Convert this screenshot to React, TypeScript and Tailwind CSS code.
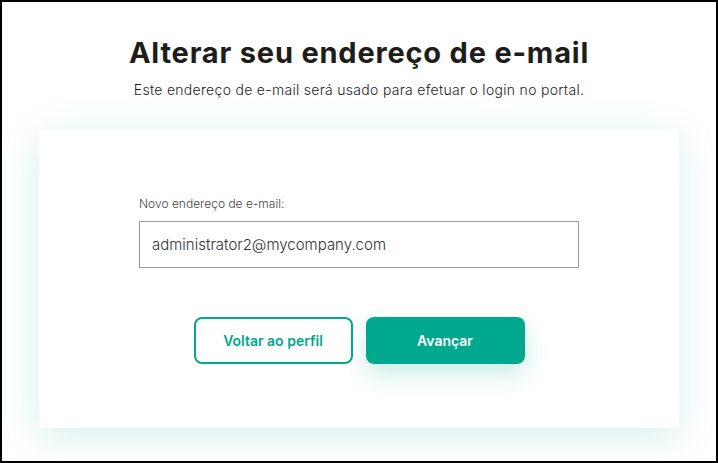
export default function App() {
  return (
    <div className="box-border flex h-[463px] w-[718px] flex-col items-center border-2 border-black bg-white font-['Inter',sans-serif]">
      <h1 className="mt-[33px] text-[29px] font-bold leading-[36px] tracking-[0.8px] text-[#1d1d1b]">
        Alterar seu endereço de e-mail
      </h1>
      <p className="mt-[9px] text-[14px] font-light leading-[20px] tracking-[0.3px] text-[#1d1d1b]">
        Este endereço de e-mail será usado para efetuar o login no portal.
      </p>

      <div className="mt-[30px] flex h-[298px] w-[640px] flex-col items-center bg-white shadow-[0_8px_36px_rgba(0,168,142,0.17)]">
        <div className="mt-[65px] w-[440px]">
          <label
            htmlFor="email"
            className="block text-[12px] font-light leading-[18px] text-[#444]"
          >
            Novo endereço de e-mail:
          </label>
          <input
            id="email"
            readOnly
            value="administrator2@mycompany.com"
            className="mt-[8px] box-border h-[47px] w-[440px] border border-[#999] px-[12px] text-[15px] font-light text-[#333] outline-none"
          />
        </div>

        <div className="mt-[49px] flex gap-[13px]">
          <button
            type="button"
            className="box-border h-[47px] w-[159px] rounded-[8px] border-2 border-[#00a88e] bg-white text-[14px] font-semibold text-[#00a88e]"
          >
            Voltar ao perfil
          </button>
          <button
            type="button"
            className="h-[47px] w-[159px] rounded-[8px] bg-[#00a88e] text-[14px] font-semibold text-white shadow-[0_10px_24px_rgba(0,168,142,0.22)]"
          >
            Avançar
          </button>
        </div>
      </div>
    </div>
  );
}
